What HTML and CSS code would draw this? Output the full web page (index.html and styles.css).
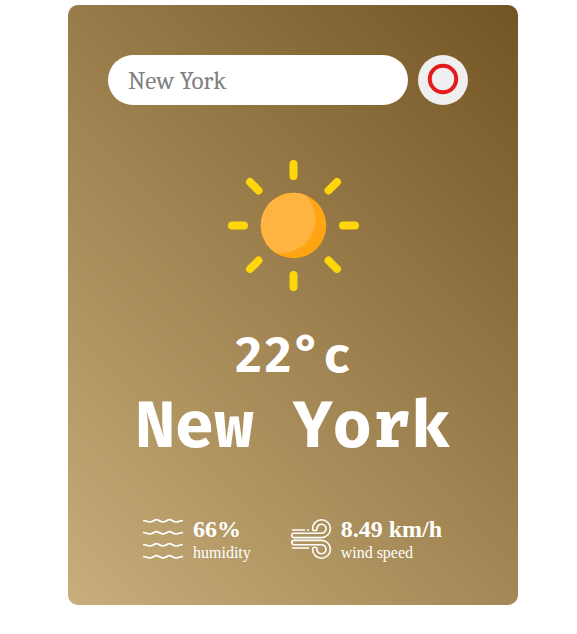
FILE: index.html
```html
<!DOCTYPE html>
<html lang="en">
<head>
<meta charset="utf-8">
<meta name="viewport" content="width=device-width, initial-scale=1">
<title>Weather</title>
<link rel="stylesheet" href="styles.css">
</head>
<body>
<main class="card">
  <form class="search">
    <input class="search-input" type="text" placeholder="New York" aria-label="City" spellcheck="false">
    <button class="search-button" type="button" aria-label="Search">
      <svg class="search-icon" viewBox="0 0 32 32" aria-hidden="true"><circle cx="16" cy="16" r="13.2"/></svg>
    </button>
  </form>
  <section class="weather">
    <svg class="weather-icon" viewBox="0 0 132 132" aria-hidden="true">
      <defs>
        <clipPath id="disc"><circle cx="66.500" cy="66.500" r="32.800"/></clipPath>
      </defs>
      <g class="rays">
        <path d="M66.500 5V17M66.500 116V128M5 66.500H17M116 66.500H128"/>
        <path d="M23 23L31.500 31.500M110 23L101.500 31.500M23 110L31.500 101.500M110 110L101.500 101.500"/>
      </g>
      <circle class="sun-shade" cx="66.500" cy="66.500" r="32.800"/>
      <circle class="sun-light" cx="54.500" cy="60" r="34" clip-path="url(#disc)"/>
    </svg>
    <h1 class="temp">22°c</h1>
    <h2 class="city">New York</h2>
    <div class="details">
      <div class="detail">
        <svg class="detail-icon" viewBox="0 0 40 40" aria-hidden="true">
          <path class="wave" d="M0 1.500C3 1.500 4 3 7 3S11 0.700 13.500 0.700S17 3 20 3S24 0.700 26.500 0.700S30 3 33 3S37 1.500 40 1.500"/>
          <path class="wave" d="M0 13.500C3 13.500 4 15 7 15S11 12.700 13.500 12.700S17 15 20 15S24 12.700 26.500 12.700S30 15 33 15S37 13.500 40 13.500"/>
          <path class="wave" d="M0 25.500C3 25.500 4 27 7 27S11 24.700 13.500 24.700S17 27 20 27S24 24.700 26.500 24.700S30 27 33 27S37 25.500 40 25.500"/>
          <path class="wave" d="M0 37.500C3 37.500 4 39 7 39S11 36.700 13.500 36.700S17 39 20 39S24 36.700 26.500 36.700S30 39 33 39S37 37.500 40 37.500"/>
        </svg>
        <div>
          <p class="value">66%</p>
          <p class="label">humidity</p>
        </div>
      </div>
      <div class="detail">
        <svg class="detail-icon" viewBox="0 0 40 40" aria-hidden="true">
          <g class="wind">
            <path d="M1.500 11H13.500M16.500 11H17.500M1.500 29H17.500"/>
            <path d="M3 14.200H30A4.500 4.500 0 1 0 26 9.600A2.200 2.200 0 0 1 21.600 9.600A8.900 8.900 0 1 1 30.500 18.600H3A2.200 2.200 0 0 1 3 14.200Z"/>
            <path d="M3 21.400H30.500A8.900 8.900 0 1 1 21.600 30.400A2.200 2.200 0 0 1 26 30.400A4.500 4.500 0 1 0 30 25.800H3A2.200 2.200 0 0 1 3 21.400Z"/>
          </g>
        </svg>
        <div>
          <p class="value">8.49 km/h</p>
          <p class="label">wind speed</p>
        </div>
      </div>
    </div>
  </section>
</main>
</body>
</html>
```
FILE: styles.css
```css
* {
  box-sizing: border-box;
  margin: 0;
  padding: 0;
}

body {
  padding: 5px 0 24px 9px;
  background: #fff;
  font-family: "Liberation Serif", serif;
}

.card {
  max-width: 450px;
  margin: 0 auto;
  padding: 50px 40px 42px;
  border-radius: 10px;
  background: linear-gradient(45deg, #c8ae7a, #735523);
  color: #fff;
  text-align: center;
}

.search {
  display: flex;
  gap: 10px;
  padding-right: 10px;
}

.search-input {
  flex: 1;
  min-width: 0;
  height: 50px;
  padding: 0 20px;
  border: 0;
  border-radius: 25px;
  background: #fff;
  color: #808080;
  font-family: Cambria, "DejaVu Serif Condensed", "DejaVu Serif", serif;
  font-size: 25px;
}

.search-input::placeholder {
  color: #808080;
}

.search-button {
  display: flex;
  justify-content: center;
  width: 50px;
  height: 50px;
  padding-top: 8px;
  border: 0;
  border-radius: 50%;
  background: #efefef;
}

.search-icon {
  width: 32px;
  height: 32px;
  fill: none;
  stroke: #e41b1b;
  stroke-width: 4;
}

.weather-icon {
  display: block;
  width: 132px;
  height: 132px;
  margin: 54px auto 34px;
}

.rays {
  fill: none;
  stroke: #ffd60a;
  stroke-width: 8;
  stroke-linecap: round;
}

.sun-shade {
  fill: #ffa412;
}

.sun-light {
  fill: #ffb341;
}

.temp,
.city {
  font-family: "Fira Code", "DejaVu Sans Mono", monospace;
  font-weight: 700;
}

.temp {
  font-size: 48px;
  line-height: 66px;
}

.city {
  font-size: 64px;
  line-height: 74px;
}

.details {
  display: flex;
  justify-content: space-between;
  margin-top: 50px;
  padding: 0 36px 0 35px;
}

.detail {
  display: flex;
  align-items: center;
  gap: 10px;
  text-align: left;
}

.detail-icon {
  width: 40px;
  height: 40px;
  overflow: visible;
  fill: none;
  stroke: #fff;
}

.wave {
  stroke-width: 1.7;
}

.wind {
  stroke-width: 1.6;
  stroke-linecap: round;
}

.value {
  font-size: 24px;
  font-weight: 700;
  line-height: 28px;
}

.label {
  font-size: 16px;
  line-height: 20px;
}
```
